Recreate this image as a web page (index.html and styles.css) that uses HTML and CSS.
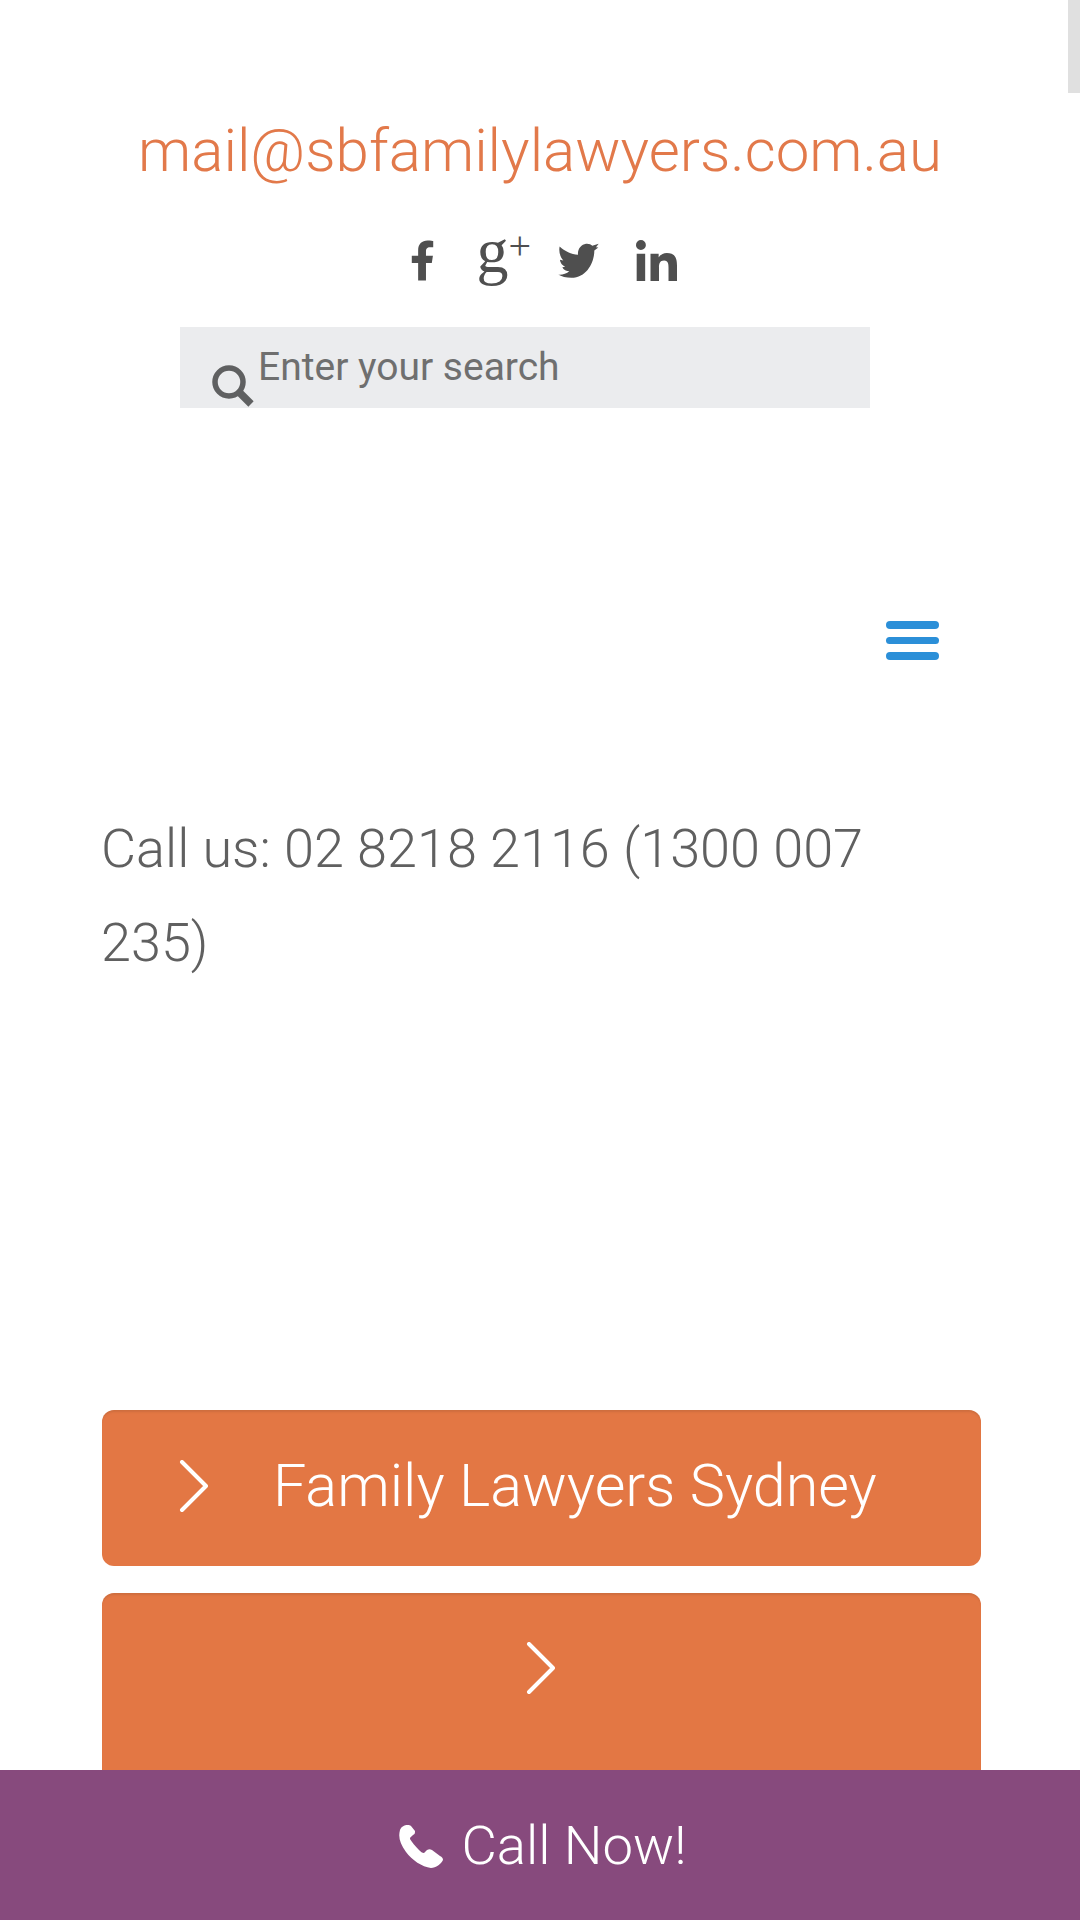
FILE: index.html
```html
<!DOCTYPE html>
<html lang="en">

<head>
    <meta charset="UTF-8">
    <meta name="viewport" content="width=device-width, initial-scale=1.0">
    <title>SB Family Lawyers</title>
    <link rel="stylesheet" href="styles.css">
</head>

<body>
    <div class="scroll-thumb"></div>

    <header class="top">
        <a class="email" href="#">mail@sbfamilylawyers.com.au</a>

        <div class="social">
            <a class="social-fb" href="#">
                <svg viewBox="0 0 320 512" width="25" height="41"><path d="M279.14 288l14.22-92.66h-88.91v-60.13c0-25.35 12.42-50.06 52.24-50.06h40.42V6.26S260.43 0 225.36 0c-73.22 0-121.08 44.38-121.08 124.72v70.62H22.89V288h81.39v224h100.17V288z"/></svg>
            </a>
            <a class="social-gplus" href="#"><span class="g">g</span><span class="plus">+</span></a>
            <a class="social-tw" href="#">
                <svg viewBox="0 0 123 104" width="41" height="35"><path d="M84 2C92 1 99 4 103 8L122 2L114 12L121 13L109 22C109 55 88 104 40 104C25 104 10 100 0 94C10 96 25 92 34 84C26 84 16 80 13 72L22 71C13 68 6 58 6 50L16 52C5 40 2 22 5 10C20 24 40 33 60 35C58 18 70 4 84 2Z"/></svg>
            </a>
            <a class="social-in" href="#">
                <svg viewBox="0 0 448 448" width="41" height="41"><path d="M100.28 448H7.4V148.9h92.88zM53.79 108.1C24.09 108.1 0 83.5 0 53.8a53.79 53.79 0 0 1 107.58 0c0 29.7-24.1 54.3-53.79 54.3zM447.9 448h-92.68V302.4c0-34.7-.7-79.2-48.29-79.2-48.29 0-55.69 37.7-55.69 76.7V448h-92.78V148.9h89.08v40.8h1.3c12.4-23.5 42.69-48.3 87.88-48.3 94 0 111.28 61.9 111.28 142.3V448z"/></svg>
            </a>
        </div>

        <form class="search" onsubmit="return false;">
            <svg class="search-icon" viewBox="0 0 42 42" width="42" height="42">
                <circle cx="17" cy="17" r="14" fill="none" stroke-width="5.500"/>
                <line x1="27" y1="27" x2="39" y2="39" stroke-width="7.500"/>
            </svg>
            <input type="text" class="search-input" placeholder="Enter your search">
        </form>
    </header>

    <div class="menu-row">
        <a class="menu-toggle" href="#"><span></span><span></span><span></span></a>
    </div>

    <p class="call-us">Call us: 02 8218 2116 (1300 007 235)</p>

    <section class="buttons">
        <a class="btn btn-first" href="#">
            <svg class="chevron" viewBox="0 0 30 53" width="30" height="53"><polyline points="4,2 28,26 4,50"/></svg>
            <span class="btn-label">Family Lawyers Sydney</span>
        </a>
        <a class="btn btn-second" href="#">
            <svg class="chevron" viewBox="0 0 30 53" width="30" height="53"><polyline points="4,2 28,26 4,50"/></svg>
        </a>
    </section>

    <a class="call-bar" href="#">
        <svg class="phone" viewBox="0 0 44 44" width="44" height="44"><path d="M9 0C5 0 2 2 1 5C-1 12 1 19 7 27C13 35 23 42 32 43C37 43 42 39 44 35C44 33 43 32 41 31L33 25C31 24 30 24 28 25L25 28C23 28 22 27 20 25C16 21 13 17 11 14C11 12 12 12 14 10C16 9 16 8 16 6L12 1C11 0 10 0 9 0Z"/></svg>
        <span>Call Now!</span>
    </a>
</body>

</html>
```

FILE: styles.css
```css
html,
body {
    height: 100%;
    overflow: hidden;
}

body {
    margin: 0;
    padding: 0;
    background-color: #fff;
    font-family: Roboto, "Liberation Sans", sans-serif;
    font-weight: 300;
}

a {
    text-decoration: none;
}

.scroll-thumb {
    position: fixed;
    top: 0;
    right: 0;
    width: 12px;
    height: 93px;
    background-color: #e0e0e0;
}

.top {
    padding-top: 115px;
    display: flex;
    flex-direction: column;
    align-items: center;
}

.email {
    font-size: 60px;
    line-height: 72px;
    color: #e2794a;
}

.social {
    margin-top: 45px;
    margin-left: 6px;
    height: 56px;
    display: flex;
    align-items: center;
    justify-content: center;
}

.social a {
    display: flex;
    align-items: center;
    fill: #4f4f4f;
    color: #4f4f4f;
}

.social-fb {
    margin-right: 42px;
}

.social-gplus {
    width: 56px;
    margin-right: 25px;
    font-family: "Liberation Serif", serif;
    font-weight: 400;
}

.social-gplus .g {
    font-size: 64px;
    line-height: 56px;
    margin-top: -18px;
}

.social-gplus .plus {
    font-size: 40px;
    line-height: 40px;
    margin-top: -28px;
}

.social-tw {
    margin-right: 37px;
}

.search {
    margin-top: 39px;
    margin-left: -30px;
    width: 690px;
    height: 81px;
    box-sizing: border-box;
    padding-left: 32px;
    background-color: #ebecee;
    display: flex;
    align-items: flex-start;
}

.search-icon {
    margin-top: 38px;
    flex-shrink: 0;
    stroke: #5f6061;
}

.search-input {
    margin-left: 4px;
    flex: 1;
    height: 80px;
    padding: 0;
    border: none;
    outline: none;
    background: transparent;
    font-family: Roboto, sans-serif;
    font-size: 39px;
    font-weight: 400;
    color: #6b6b6b;
}

.search-input::placeholder {
    color: #6f6f6f;
    opacity: 1;
}

.menu-row {
    margin-top: 213px;
    padding-right: 141px;
    display: flex;
    justify-content: flex-end;
}

.menu-toggle {
    width: 53px;
    display: flex;
    flex-direction: column;
    gap: 8px;
}

.menu-toggle span {
    height: 7.5px;
    border-radius: 4px;
    background-color: #2b8fd8;
}

.call-us {
    margin: 142px 0 0;
    padding: 0 204px 0 101px;
    font-size: 54px;
    line-height: 94px;
    color: #606060;
}

.buttons {
    margin-top: 420px;
    padding: 0 99px 0 102px;
    display: flex;
    flex-direction: column;
    gap: 27px;
}

.btn {
    background-color: #e37744;
    border-radius: 12px;
    box-shadow: inset 0 3px 2px -1px rgba(160, 90, 50, 0.3);
    display: flex;
    align-items: center;
    color: #fff;
}

.btn-first {
    height: 156px;
    padding-left: 76px;
    font-size: 59.3px;
    gap: 65px;
}

.btn-label {
    padding-bottom: 4px;
}

.btn-first .chevron {
    margin-bottom: 3px;
}

.btn-second {
    height: 300px;
    align-items: flex-start;
    justify-content: center;
    padding-top: 49px;
    padding-right: 4px;
    box-sizing: border-box;
}

.chevron {
    fill: none;
    stroke: #fff;
    stroke-width: 4;
    stroke-linecap: round;
    stroke-linejoin: round;
    flex-shrink: 0;
}

.call-bar {
    position: fixed;
    left: 0;
    right: 0;
    bottom: 0;
    height: 150px;
    box-sizing: border-box;
    padding-left: 6px;
    background-color: #874a7d;
    display: flex;
    align-items: center;
    justify-content: center;
    gap: 18px;
    font-size: 54.5px;
    color: #fff;
}

.phone {
    fill: #fff;
    margin-top: 4px;
}
```
